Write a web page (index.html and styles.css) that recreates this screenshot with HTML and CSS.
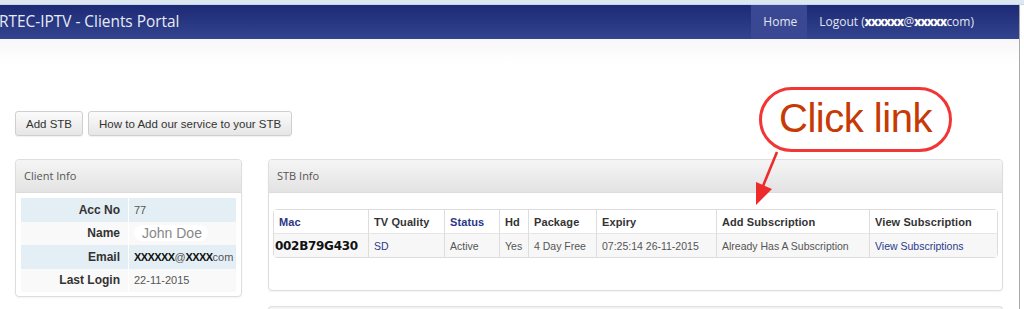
FILE: index.html
```html
<!DOCTYPE html>
<html>
<head>
<meta charset="utf-8">
<link rel="stylesheet" href="styles.css">
</head>
<body>
<div class="chrome"></div>
<div class="frame">
  <div class="page">
    <nav class="navbar">
      <div class="brand">RTEC-IPTV - Clients Portal</div>
      <ul class="nav">
        <li class="active">Home</li>
        <li>Logout (<span class="blur">xxxxxx</span>@<span class="blur">xxxxx</span>com)</li>
      </ul>
    </nav>
    <div class="content">
      <div class="actions">
        <button class="btn">Add STB</button>
        <button class="btn">How to Add our service to your STB</button>
      </div>
      <div class="row">
        <div class="col-left">
          <div class="panel client">
            <div class="panel-head">Client Info</div>
            <div class="panel-body">
              <table class="info">
                <tr class="odd"><th>Acc No</th><td>77</td></tr>
                <tr><th>Name</th><td><span class="name">John Doe</span></td></tr>
                <tr class="odd"><th>Email</th><td><b class="mask">XXXXXX</b>@<b class="mask">XXXX</b>com</td></tr>
                <tr><th>Last Login</th><td>22-11-2015</td></tr>
              </table>
            </div>
          </div>
        </div>
        <div class="col-right">
          <div class="panel stb">
            <div class="panel-head">STB Info</div>
            <div class="panel-body">
              <table class="grid">
                <tr class="head">
                  <th class="sort c-mac">Mac</th>
                  <th class="c-tv">TV Quality</th>
                  <th class="sort c-st">Status</th>
                  <th class="c-hd">Hd</th>
                  <th class="c-pk">Package</th>
                  <th class="c-ex">Expiry</th>
                  <th class="c-add">Add Subscription</th>
                  <th class="c-view">View Subscription</th>
                </tr>
                <tr class="data">
                  <td class="mac">002B79G430</td>
                  <td class="link">SD</td>
                  <td>Active</td>
                  <td>Yes</td>
                  <td>4 Day Free</td>
                  <td>07:25:14 26-11-2015</td>
                  <td>Already Has A Subscription</td>
                  <td class="link">View Subscriptions</td>
                </tr>
              </table>
            </div>
          </div>
          <div class="panel next"></div>
        </div>
      </div>
    </div>
    <div class="callout">Click link</div>
    <svg class="arrow" width="40" height="60" viewBox="0 0 40 60">
      <line x1="32" y1="2" x2="18" y2="36" stroke="#ee2b2b" stroke-width="2.6"/>
      <polygon points="11,32 27,39 11,55" fill="#ee2b2b"/>
    </svg>
  </div>
  <div class="edge"></div>
</div>
</body>
</html>
```
FILE: styles.css
```css
html, body {
  margin: 0;
  padding: 0;
  background: #fff;
  font-family: "Liberation Sans", Arial, sans-serif;
  overflow: hidden;
}
.chrome {
  height: 5px;
  background: #dde7f2;
  border-bottom: 1px solid #c9d6e6;
  box-sizing: border-box;
}
.frame {
  display: flex;
  height: 304px;
}
.page {
  flex: 1;
  position: relative;
  background: #fff;
}
.edge {
  width: 4px;
  border-left: 1px solid #a9a9a9;
  background: #fff;
}
.navbar {
  height: 34px;
  display: flex;
  align-items: stretch;
  justify-content: space-between;
  background: linear-gradient(#1d2a76, #33448e);
  box-shadow: 0 2px 4px rgba(0,0,0,0.06);
}
.brand {
  font-family: "Open Sans", "DejaVu Sans", sans-serif;
  font-size: 15.4px;
  color: #e9ebf4;
  line-height: 34px;
  margin-left: -1px;
}
.nav {
  list-style: none;
  margin: 0;
  padding: 0 33px 0 0;
  display: flex;
}
.nav li {
  font-family: "Open Sans", "DejaVu Sans", sans-serif;
  font-size: 12px;
  color: #e2e5f0;
  line-height: 34px;
  padding: 0 12px;
}
.nav li.active {
  background: #3a4893;
  padding: 0 10px 0 12px;
}
.blur {
  color: #fff;
  font-weight: bold;
  letter-spacing: -0.5px;
  text-shadow: 0 0 1px #ccc;
}
.content {
  padding: 72px 16px 0 15px;
  background: linear-gradient(#f7f7f9, #fff 24px);
}
.actions {
  display: flex;
  gap: 5px;
}
.btn {
  height: 25px;
  padding: 0 10px;
  white-space: nowrap;
  font-family: "Liberation Sans", Arial, sans-serif;
  font-size: 11.5px;
  color: #333;
  background: linear-gradient(#fbfbfb, #e6e6e6);
  border: 1px solid #cfcfcf;
  border-radius: 3px;
  box-shadow: 0 1px 1px rgba(0,0,0,0.06);
}
.row {
  display: flex;
  gap: 26px;
  margin-top: 23px;
}
.col-left {
  width: 227px;
}
.col-right {
  flex: 1;
  display: flex;
  flex-direction: column;
  gap: 15px;
}
.panel {
  border: 1px solid #dedede;
  border-radius: 4px;
  background: #fff;
  box-shadow: 0 1px 2px rgba(0,0,0,0.05);
  box-sizing: border-box;
}
.panel-head {
  height: 32px;
  line-height: 32px;
  padding-left: 8px;
  font-family: "Open Sans", "DejaVu Sans", sans-serif;
  font-size: 11px;
  color: #555;
  background: linear-gradient(#f5f5f5, #e3e3e3);
  border-bottom: 1px solid #dcdcdc;
  border-radius: 4px 4px 0 0;
}
.client {
  height: 138px;
}
.client .panel-body {
  padding: 5px 5px 0 5px;
}
.info {
  width: 100%;
  border-collapse: collapse;
}
.info tr {
  height: 23.5px;
  background: #f9f9f9;
}
.info tr.odd {
  background: #e4eef5;
}
.info th {
  width: 99px;
  text-align: right;
  padding: 0 8px 0 0;
  font-size: 12px;
  font-weight: bold;
  color: #333;
  border-right: 1px solid #fff;
}
.info td {
  padding: 0 0 0 5px;
  font-size: 11px;
  color: #555;
}
.name {
  display: inline-block;
  font-size: 14px;
  color: #888;
  padding: 0 6px 0 8px;
  background: #fff;
  border-radius: 8px;
}
.mask {
  color: #111;
  letter-spacing: -0.6px;
}
.stb {
  height: 132px;
}
.stb .panel-body {
  padding: 16px 4px 0 4px;
}
.grid {
  width: 100%;
  border-collapse: separate;
  border-spacing: 0;
  border: 1px solid #dddddd;
  border-radius: 4px;
  table-layout: fixed;
}
.grid th, .grid td {
  border-left: 1px solid #dddddd;
  text-align: left;
  white-space: nowrap;
  overflow: hidden;
}
.grid th:first-child, .grid td:first-child {
  border-left: none;
}
.grid th {
  height: 23px;
  padding: 0 0 0 5px;
  font-size: 11px;
  font-weight: bold;
  color: #333;
  background: #fff;
  letter-spacing: 0.1px;
}
.grid th.sort {
  color: #2b3686;
}
.grid td {
  height: 23px;
  padding: 0 0 0 5px;
  font-size: 10.5px;
  color: #555;
  background: #f7f7f7;
  border-top: 1px solid #e6e6e6;
}
.grid td.link {
  color: #2b3a8a;
}
.grid td.mac {
  font-family: "DejaVu Sans", sans-serif;
  font-weight: bold;
  font-size: 12px;
  color: #111;
  padding-left: 1px;
  letter-spacing: -0.3px;
}
.c-mac { width: 89px; }
.c-tv { width: 70px; }
.c-st { width: 49px; }
.c-hd { width: 23px; }
.c-pk { width: 62px; }
.c-ex { width: 114px; }
.c-add { width: 147px; }
.next {
  height: 10px;
  border-bottom: none;
  border-radius: 4px 4px 0 0;
  background: linear-gradient(#f2f2f2, #fff);
}
.callout {
  position: absolute;
  left: 759px;
  top: 82px;
  width: 187px;
  height: 59px;
  border: 3px solid #f23535;
  border-radius: 34px;
  font-family: "Liberation Sans", Arial, sans-serif;
  font-size: 40px;
  line-height: 57px;
  text-align: center;
  color: #c53a05;
  background: #fff;
  letter-spacing: -0.5px;
}
.arrow {
  position: absolute;
  left: 745px;
  top: 145px;
}
```
